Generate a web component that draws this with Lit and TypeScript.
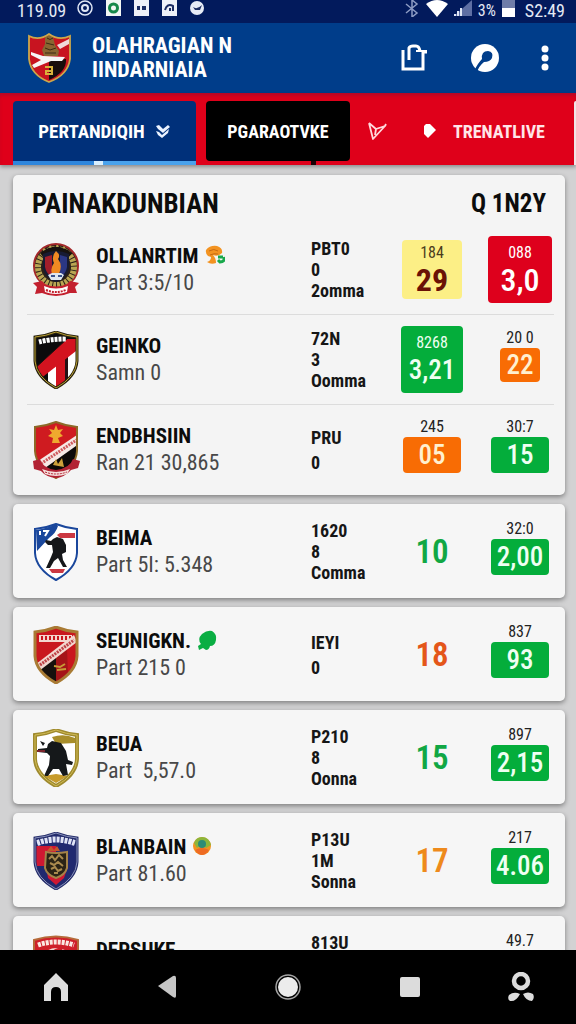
import { LitElement, html, svg, css, nothing } from "lit";
import { customElement, property } from "lit/decorators.js";

type Tone = "yellow" | "red" | "green" | "orange" | "plain-green" | "plain-red" | "plain-amber";

interface Score {
  label?: string;
  value: string;
  tone: Tone;
  boxed?: boolean;
  small?: boolean;
}

interface Team {
  crest: string;
  name: string;
  detail: string;
  mark?: string;
  info: string[];
  first: Score;
  second: Score;
}

const shield = "M3 6 Q14 5 24 1 Q34 5 45 6 V30 Q44 46 24 57 Q4 46 3 30 Z";

const crests: Record<string, unknown> = {
  laurel: svg`
    <circle cx="24" cy="25" r="22" fill="#2a2018" stroke="#a3282a" stroke-width="2"/>
    <circle cx="24" cy="26" r="18" fill="none" stroke="#b9a552" stroke-width="6" stroke-dasharray="3 1"/>
    <path d="M8 12 Q24 -1 40 12 L36 17 Q24 8 12 17Z" fill="#17120f"/>
    <path d="M11 9 Q24 1 37 9" fill="none" stroke="#b9a552" stroke-width="2" stroke-dasharray="2 5"/>
    <path d="M11 13 Q24 7 37 13 V27 Q35 37 24 41 Q13 37 11 27Z" fill="#171b33"/>
    <path d="M13 16 L20 14 V36 Q14 32 13 26Z" fill="#a31e2b"/>
    <path d="M28 14 L35 16 V26 Q34 33 28 36Z" fill="#2b3784"/>
    <path d="M24 10 Q29 14 26 18 Q31 24 27 33 H20 Q18 27 22 22 Q19 16 24 10Z" fill="#f08a22"/>
    <path d="M16 34 L20 32 H29 L32 34 L29 39 H19Z" fill="#dfe7ef"/>
    <path d="M19 35 H23 M26 35 H30" stroke="#39538c" stroke-width="2"/>
    <path d="M1 42 L10 40 L13 43 Q24 48 35 43 L38 40 L47 42 L43 46 L45 52 L38 52 Q24 58 10 52 L3 53 L5 46Z" fill="#c3202e"/>
    <path d="M12 45 Q24 50 36 45 L35 51 Q24 55 13 51Z" fill="#fff"/>
    <path d="M14 49 Q24 53 34 49" fill="none" stroke="#c3202e" stroke-width="2" stroke-dasharray="2 1"/>`,
  stripe: svg`
    <clipPath id="c1"><path d=${shield}/></clipPath>
    <g clip-path="url(#c1)">
      <path d="M0 0H48V58H0Z" fill="#0c0b0c"/>
      <path d="M16 38 L48 12 V58 H16Z" fill="#fff"/>
      <path d="M24 28 H33 V58 H24Z" fill="#d3131f"/>
      <path d="M33 25 L36 22 V58 H33Z" fill="#241014"/>
      <path d="M0 40 L35 8 H48 V17 L8 48Z" fill="#d3131f"/>
      <path d="M0 40 L35 8" stroke="#24100f" stroke-width="1"/>
      <path d="M7 11 Q18 8 34 8" fill="none" stroke="#fff" stroke-width="5" stroke-dasharray="3 1"/>
    </g>
    <path d=${shield} fill="none" stroke="#29220f" stroke-width="3"/>
    <path d=${shield} fill="none" stroke="#b9a032" stroke-width="1"/>`,
  ribbon: svg`
    <clipPath id="c2"><path d=${shield}/></clipPath>
    <g clip-path="url(#c2)">
      <path d="M0 0H48V58H0Z" fill="#cf1b20"/>
      <path d="M8 50 L48 18 V58 H8Z" fill="#0d0908"/>
      <path d="M0 44 L48 12 V22 L6 52Z" fill="#f6e9e6"/>
      <path d="M4 46 L46 18" stroke="#ce5a5d" stroke-width="3" stroke-dasharray="2 1"/>
      <path d="M24 4 L26 9 L31 8 L28 12 L31 15 L26 17 L28 22 H20 L21 17 L16 15 L20 12 L17 8 L22 9Z" fill="#efa92e"/>
      <path d="M21 44 L24 38 L26 43 L30 37 L32 46Z" fill="#cda03a"/>
    </g>
    <path d=${shield} fill="none" stroke="#8c6a28" stroke-width="2"/>
    <path d="M1 40 L8 38 Q10 47 24 49 Q38 47 41 38 L48 40 L46 47 L39 49 Q33 56 24 57 Q14 56 9 50 L2 48Z" fill="#b22233"/>
    <path d="M10 48 Q24 54 38 48 L35 53 Q24 57 13 53Z" fill="#f5dfdb"/>
    <path d="M13 51 Q24 55 35 51" fill="none" stroke="#b22233" stroke-width="1" stroke-dasharray="2 1"/>`,
  fighter: svg`
    <path d=${shield} fill="#fff"/>
    <path d="M4 7 Q16 5 24 1 L26 3 Q24 10 17 15 L5 28Z" fill="#1a479c"/>
    <path d="M8 8 V12 M11 8 H16 L13 13" stroke="#fff" stroke-width="2" fill="none"/>
    <path d="M25 12 L28 10 H43 V15 H28Z" fill="#cb3842"/>
    <path d="M21 16 L25 14 L31 16 L34 22 L34 29 L30 31 L31 37 L35 44 L31 44 L26 35 L22 38 L18 45 L14 45 L19 34 L21 29 L20 22 L16 22 L13 19 L14 17 L19 18Z" fill="#15171a"/>
    <path d="M17 46 H33 L31 50 H20Z" fill="#cb3842"/>
    <path d=${shield} fill="none" stroke="#1a479c" stroke-width="2"/>`,
  sash: svg`
    <clipPath id="c3"><path d=${shield}/></clipPath>
    <g clip-path="url(#c3)">
      <path d="M0 0H48V58H0Z" fill="#c9171e"/>
      <path d="M4 42 L24 30 V58 H4Z" fill="#17100d"/>
      <path d="M24 30 L35 22 L36 50 L24 58Z" fill="#a51418"/>
      <path d="M7 9 H40 V16 H7Z" fill="#f3d7cf"/>
      <path d="M9 12 H40" stroke="#c9171e" stroke-width="4" stroke-dasharray="2 2"/>
      <path d="M4 38 L42 9 L45 16 L7 45Z" fill="#f3d7cf"/>
      <path d="M8 39 L42 14" stroke="#be4347" stroke-width="3" stroke-dasharray="2 1"/>
      <path d="M22 40 L28 41 L33 38 M25 44 L34 43" stroke="#c79a36" stroke-width="2" fill="none"/>
    </g>
    <path d=${shield} fill="none" stroke="#a97b34" stroke-width="3"/>`,
  bear: svg`
    <path d=${shield} fill="#fff"/>
    <path d="M20 8 Q32 4 43 9 V14 L24 15Z" fill="#a88e2a"/>
    <path d="M12 47 L24 45 L36 47 L24 54Z" fill="#c79b2b"/>
    <path d="M16 15 L20 12 L29 14 L34 22 L36 31 L41 33 L40 36 L34 35 L36 46 L31 47 L27 40 L21 40 L16 47 L12 47 L17 36 L18 27 L15 24 L6 23 V20 L15 19Z" fill="#15181a"/>
    <path d="M8 12 L13 14 L11 17Z" fill="#15181a"/>
    <path d="M5 22 H13" stroke="#7c242c" stroke-width="2"/>
    <path d=${shield} fill="none" stroke="#9f8a2e" stroke-width="4"/>
    <path d=${shield} fill="none" stroke="#d0bb55" stroke-width="1"/>`,
  royal: svg`
    <clipPath id="c4"><path d=${shield}/></clipPath>
    <g clip-path="url(#c4)">
      <path d="M0 0H48V58H0Z" fill="#20296f"/>
      <path d="M3 14 H24 V34 H4Z" fill="#cf1832"/>
      <path d="M14 34 H36 L32 46 L24 53 L16 46Z" fill="#cf1832"/>
      <path d="M5 11 Q24 4 43 11" fill="none" stroke="#dfe3f5" stroke-width="6" stroke-dasharray="3 1"/>
      <path d="M14 20 Q24 22 35 20 V36 Q33 43 24 46 Q15 43 13 36Z" fill="#2b2416" stroke="#a48348" stroke-width="2"/>
      <path d="M17 27 L20 24 L23 28 L27 23 L31 27 M18 31 L22 33 L26 30 L31 34 M19 37 L23 35 L26 39 L30 37 M22 41 H26" stroke="#a98a4e" stroke-width="2" fill="none"/>
      <path d="M15 19 L19 14 L22 18 L25 14 L28 19Z" fill="#c4572c"/>
    </g>
    <path d=${shield} fill="none" stroke="#262e6b" stroke-width="3"/>
    <path d=${shield} fill="none" stroke="#8790bb" stroke-width="1"/>`,
  crimson: svg`
    <path d="M2 5 Q24 -2 46 5 V30 Q43 46 24 56 Q5 46 2 30Z" fill="#cf2029" stroke="#b56b3a" stroke-width="2"/>
    <path d="M6 10 Q24 4 42 10" fill="none" stroke="#fbe9e2" stroke-width="5" stroke-dasharray="3 1"/>
    <path d="M10 24 Q14 12 26 13 Q18 15 18 24Z M30 14 Q38 16 40 26 L34 22Z" fill="#f6d9d3"/>`,
};

const marks: Record<string, unknown> = {
  curl: svg`
    <path d="M2 5 Q6 0 13 1 Q19 3 18 8 Q14 12 9 10 Q12 13 12 18 Q7 20 3 17 Q7 16 7 12 Q1 11 2 5Z" fill="#f39321"/>
    <path d="M5 6 Q10 3 14 6 M6 10 Q10 8 14 9" stroke="#c76a12" stroke-width="1" fill="none"/>
    <path d="M14 12 H19 M20 12 Q21 17 16 17 L14 15" stroke="#18a84b" stroke-width="3" fill="none"/>`,
  leaf: svg`
    <path d="M5 4 Q10 0 15 1 Q20 4 19 10 Q18 16 13 16 Q12 20 9 20 L6 18 L2 20 L1 16 L4 14 Q0 9 5 4Z" fill="#0bae43"/>`,
  badge: svg`
    <circle cx="10" cy="10" r="9" fill="#f39321"/>
    <path d="M2 7 Q4 1 10 1 Q17 1 19 9 L14 12 L10 8 L5 12Z" fill="#8db63a"/>
    <circle cx="10" cy="8" r="4" fill="#2c8c77"/>
    <path d="M3 14 Q10 10 17 14 Q14 19 10 19 Q6 19 3 14Z" fill="#ee6b23"/>`,
};

const groups: Team[][] = [
  [
    { crest: "laurel", name: "OLLANRTIM", detail: "Part 3:5/10", mark: "curl", info: ["PBT0", "0", "2omma"],
      first: { label: "184", value: "29", tone: "yellow", boxed: true }, second: { label: "088", value: "3,0", tone: "red", boxed: true } },
    { crest: "stripe", name: "GEINKO", detail: "Samn 0", info: ["72N", "3", "Oomma"],
      first: { label: "8268", value: "3,21", tone: "green", boxed: true }, second: { label: "20 0", value: "22", tone: "orange", small: true } },
    { crest: "ribbon", name: "ENDBHSIIN", detail: "Ran 21 30,865", info: ["PRU", "0"],
      first: { label: "245", value: "05", tone: "orange" }, second: { label: "30:7", value: "15", tone: "green" } },
  ],
  [
    { crest: "fighter", name: "BEIMA", detail: "Part 5I: 5.348", info: ["1620", "8", "Comma"],
      first: { value: "10", tone: "plain-green" }, second: { label: "32:0", value: "2,00", tone: "green" } },
  ],
  [
    { crest: "sash", name: "SEUNIGKN.", detail: "Part 215 0", mark: "leaf", info: ["IEYI", "0"],
      first: { value: "18", tone: "plain-red" }, second: { label: "837", value: "93", tone: "green" } },
  ],
  [
    { crest: "bear", name: "BEUA", detail: "Part  5,57.0", info: ["P210", "8", "Oonna"],
      first: { value: "15", tone: "plain-green" }, second: { label: "897", value: "2,15", tone: "green" } },
  ],
  [
    { crest: "royal", name: "BLANBAIN", detail: "Part 81.60", mark: "badge", info: ["P13U", "1M", "Sonna"],
      first: { value: "17", tone: "plain-amber" }, second: { label: "217", value: "4.06", tone: "green" } },
  ],
  [
    { crest: "crimson", name: "DEPSUKE", detail: "Part 41.20", info: ["813U", "0", "Oonna"],
      first: { value: "12", tone: "plain-amber" }, second: { label: "49.7", value: "3,10", tone: "green" } },
  ],
];

@customElement("score-cell")
class ScoreCell extends LitElement {
  @property({ attribute: false }) score!: Score;

  static styles = css`
    :host { display: block; }
    .stack { display: flex; flex-direction: column; align-items: center; padding-bottom: 10px; }
    .label { font-size: 16px; line-height: 20px; color: #222; }
    .chip { width: 58px; height: 36px; border-radius: 4px; display: grid; place-items: center; }
    .chip.small { width: 40px; height: 34px; }
    .value { font-size: 27px; line-height: 32px; font-weight: 500; }
    .tile { width: 62px; height: 67px; margin: 0 auto; border-radius: 4px; display: flex; flex-direction: column; align-items: center; justify-content: center; }
    .tile .label { color: inherit; }
    .tile .value { font-size: 32px; line-height: 34px; }
    .tile.green .value { font-size: 27px; }
    .tile.yellow .value { font-weight: 700; }
    .yellow { background: #fcef86; color: #6a1206; height: 59px; width: 60px; }
    .red { background: #de001c; color: #fff; width: 64px; }
    .green { background: #04ad3b; color: #effff2; }
    .orange { background: #f86c04; color: #fff0cf; }
    .yellow .label { color: #4b3c1c; }
    .plain { text-align: center; }
    .plain .value { font-size: 33px; line-height: 38px; font-weight: 600; }
    .plain-green { color: #11a744; }
    .plain-red { color: #e4561a; }
    .plain-amber { color: #ee8a1c; }
  `;

  render() {
    const s = this.score;
    if (s.boxed) {
      return html`<div class="tile ${s.tone}"><span class="label">${s.label}</span><span class="value">${s.value}</span></div>`;
    }
    if (!s.label) {
      return html`<div class="plain ${s.tone}"><span class="value">${s.value}</span></div>`;
    }
    return html`<div class="stack"><span class="label">${s.label}</span>
      <div class="chip ${s.tone} ${s.small ? "small" : ""}"><span class="value">${s.value}</span></div></div>`;
  }
}

@customElement("team-row")
class TeamRow extends LitElement {
  @property({ attribute: false }) team!: Team;

  static styles = css`
    :host { display: block; padding: 0 13px 0 19px; }
    .row { display: grid; grid-template-columns: minmax(0, 1fr) 65px 64px 64px; column-gap: 24px; align-items: center; min-height: 89px; }
    .team { display: flex; align-items: center; gap: 16px; white-space: nowrap; }
    .crest { width: 48px; height: 58px; flex: none; }
    .text { padding-bottom: 2px; }
    .name { margin: 0; display: flex; align-items: center; gap: 6px; font-size: 21px; line-height: 28px; font-weight: 700; color: #0c0c0c; }
    .mark { width: 21px; height: 21px; flex: none; }
    .detail { margin: 0; font-size: 22px; line-height: 26px; color: #484848; white-space: pre; }
    .info { font-size: 18px; line-height: 21px; font-weight: 700; color: #161616; }
    .info.short { line-height: 25px; }
    .line { display: block; }
  `;

  render() {
    const t = this.team;
    return html`<div class="row">
      <div class="team">
        <svg class="crest" viewBox="0 0 48 58" aria-hidden="true">${crests[t.crest]}</svg>
        <div class="text">
          <h3 class="name">${t.name}${t.mark ? html`<svg class="mark" viewBox="0 0 21 21" aria-hidden="true">${marks[t.mark]}</svg>` : nothing}</h3>
          <p class="detail">${t.detail}</p>
        </div>
      </div>
      <div class="info ${t.info.length < 3 ? "short" : ""}">${t.info.map((l) => html`<span class="line">${l}</span>`)}</div>
      <score-cell .score=${t.first}></score-cell>
      <score-cell .score=${t.second}></score-cell>
    </div>`;
  }
}

@customElement("app-root")
class AppRoot extends LitElement {
  static styles = css`
    :host { display: flex; flex-direction: column; height: 100vh; overflow: hidden; background: #d2d2d3; font-family: "Roboto Condensed", "Liberation Sans Narrow", Roboto, sans-serif; }
    button { font: inherit; color: inherit; background: none; border: 0; padding: 0; margin: 0; cursor: pointer; }
    .status { flex: none; height: 23px; box-sizing: border-box; padding: 0 11px 0 17px; background: #021a5c; color: #e4e9f5; display: flex; align-items: flex-start; justify-content: space-between; font-size: 18px; line-height: 21px; }
    .side { display: flex; align-items: flex-start; }
    .left { gap: 11px; }
    .right { gap: 6px; }
    .percent { font-size: 16px; }
    .clock { margin-left: 4px; }
    .glyph { height: 17px; flex: none; }
    .bar { flex: none; height: 70px; padding: 0 27px; background: #003d8a; color: #fff; display: flex; align-items: center; }
    .logo { width: 45px; height: 50px; flex: none; margin-right: 20px; }
    .brand { margin: 0; flex: 1; font-size: 22px; line-height: 24px; font-weight: 700; }
    .brand-line { display: block; }
    .actions { display: flex; align-items: center; gap: 41px; }
    .action { display: grid; }
    .tabs { flex: none; height: 72px; box-sizing: border-box; padding: 8px 0 0 13px; background: #df001a; box-shadow: 0 2px 4px #0005, inset 0 4px 4px -2px #7a103880; color: #fff; display: flex; align-items: flex-start; gap: 10px; z-index: 1; }
    .tab { height: 60px; min-width: 0; font-size: 18px; font-weight: 700; white-space: nowrap; display: flex; align-items: center; justify-content: center; gap: 10px; }
    .main-tab { flex: 183 1 0; height: 64px; box-sizing: border-box; padding-bottom: 4px; font-size: 19px; border-radius: 4px 4px 0 0; background: linear-gradient(90deg, #2f86dc 0 44%, #d9efff 44% 49%, #4aa2ec 49%) bottom / 100% 4px no-repeat #00307a; }
    .dark-tab { flex: 144 1 0; background: #000; border-radius: 4px; position: relative; }
    .dark-tab::after { content: ""; position: absolute; top: 100%; left: 73%; width: 5px; height: 4px; background: #1a0004; }
    .icon-tab { flex: 34 1 0; }
    .live-tab { flex: 160 1 0; gap: 16px; color: #ffe5e8; }
    .next { flex: none; width: 2px; height: 64px; background: #efe6e8; border-radius: 2px 0 0 0; }
    .feed { flex: 1; min-height: 0; overflow: hidden; padding: 10px 11px 0 13px; display: flex; flex-direction: column; gap: 9px; }
    .card { flex: none; background: #f6f6f6; border-radius: 5px; box-shadow: 0 2px 5px #0006; padding: 3px 0 2px; }
    .card.lead { padding: 0 0 1px; background: #f4f4f4; }
    .head { display: flex; justify-content: space-between; align-items: center; box-sizing: border-box; padding: 8px 19px 0; height: 50px; font-size: 27px; line-height: 32px; color: #0c0c0c; }
    .title { margin: 0; font-size: inherit; font-weight: 700; }
    .round { font-size: 25px; }
    .rule { border: 0; height: 1px; background: #dcdcdc; margin: 0 11px 0 14px; }
    .nav { flex: none; height: 74px; background: #000; display: grid; grid-template-columns: 112fr 110fr 132fr 112fr 110fr; align-items: center; }
    .key { display: grid; justify-items: center; }
  `;

  render() {
    return html`
      <div class="status">
        <div class="side left">
          <span>119.09</span>
          <svg class="glyph" width="17" viewBox="0 0 17 17"><circle cx="8" cy="8" r="7" fill="none" stroke="#dfe6f5" stroke-width="1.5"/><circle cx="8" cy="8" r="3" fill="none" stroke="#dfe6f5" stroke-width="2"/></svg>
          <svg class="glyph" width="17" viewBox="0 0 17 17"><path d="M1 0H16V16H1Z" fill="#f2f7f4"/><circle cx="8.500" cy="8" r="4" fill="none" stroke="#16894a" stroke-width="3"/></svg>
          <svg class="glyph" width="17" viewBox="0 0 17 17"><path d="M1 0H16V16H1Z" fill="#eef1f8"/><path d="M4 6h3v4H4ZM9 6h4v4H9Z" fill="#1c2d63"/></svg>
          <svg class="glyph" width="17" viewBox="0 0 17 17"><path d="M1 0H16V16H1Z" fill="#eef1f8"/><path d="M4 10Q6 3 12 6V11M9 8v3" fill="none" stroke="#1c2d63" stroke-width="2"/></svg>
          <svg class="glyph" width="17" viewBox="0 0 17 17"><circle cx="8" cy="8" r="7" fill="#e7ecf7"/><path d="M4 7Q8 10 13 5L11 10H6Z" fill="#1c2d63"/></svg>
        </div>
        <div class="side right">
          <svg class="glyph" width="16" viewBox="0 0 16 17"><path d="M2 4L13 13L8 17V0L13 4L2 13" fill="none" stroke="#8d9cc4" stroke-width="1.500"/></svg>
          <svg class="glyph" width="22" viewBox="0 0 22 17"><path d="M0 4Q11 -4 22 4L11 17Z" fill="#fff"/></svg>
          <svg class="glyph" width="18" viewBox="0 0 18 17"><path d="M0 16L18 0V16Z" fill="#5e6fa4"/><path d="M1 16V14M4 16V11M7 16V8" stroke="#dfe6f5" stroke-width="2"/></svg>
          <span class="percent">3%</span>
          <svg class="glyph" width="13" viewBox="0 0 13 17"><path d="M0 0H13V8H0Z" fill="#6f7da8"/><path d="M0 8H13V17H0Z" fill="#fff"/></svg>
          <span class="clock">S2:49</span>
        </div>
      </div>

      <header class="bar">
        <svg class="logo" viewBox="0 0 45 50" aria-hidden="true">
          <path d="M2 3Q12 8 22 1Q32 8 43 3V26Q41 42 22 49Q4 42 2 26Z" fill="#c81420"/>
          <path d="M22 28L39 26Q40 39 22 47Z" fill="#190d0b"/>
          <path d="M4 19L16 23L38 24L35 28H24L7 35L5 32L14 27L4 22Z" fill="#f6f6f6"/>
          <path d="M30 12L42 6V11L33 16Z" fill="#f0dada"/>
          <path d="M18 4Q22 -1 26 4L28 12L32 18L31 23H17L15 17L18 11Z" fill="#8a6531"/>
          <path d="M20 5Q23 8 26 5M19 10L27 12M18 15L23 17L29 15M18 20H29" stroke="#3c2a14" stroke-width="1" fill="none"/>
          <path d="M18 34H25V41H19V38H24" fill="none" stroke="#d9b23c" stroke-width="2"/>
          <path d="M2 3Q12 8 22 1Q32 8 43 3V26Q41 42 22 49Q4 42 2 26Z" fill="none" stroke="#cda84a" stroke-width="1.800"/>
        </svg>
        <h1 class="brand"><span class="brand-line">OLAHRAGIAN N</span><span class="brand-line">IINDARNIAIA</span></h1>
        <div class="actions">
          <button class="action" aria-label="Share"><svg width="28" height="28" viewBox="0 0 28 28"><path d="M2 6V25H22V8H26M8 16V4Q9 2 12 2H15Q18 2 19 7" fill="none" stroke="#fff" stroke-width="3"/><path d="M15 7H26" stroke="#fff" stroke-width="2"/></svg></button>
          <button class="action" aria-label="Explore"><svg width="30" height="28" viewBox="0 0 30 28"><circle cx="15" cy="14" r="14" fill="#fff"/><path d="M4 27Q8 19 12 15Q11 7 18 7Q24 8 22 14Q20 18 14 18Q9 22 7 28Z" fill="#003d8a"/></svg></button>
          <button class="action" aria-label="More"><svg width="8" height="26" viewBox="0 0 8 26"><circle cx="4" cy="4" r="3.500" fill="#fff"/><circle cx="4" cy="13" r="3.500" fill="#fff"/><circle cx="4" cy="22" r="3.500" fill="#fff"/></svg></button>
        </div>
      </header>

      <nav class="tabs">
        <button class="tab main-tab">PERTANDIQIH
          <svg width="16" height="15" viewBox="0 0 16 15"><path d="M1 2L4 1L8 5L13 1L15 3L9 8L8 9L3 5Z M1 7L4 8L7 11L14 5L13 9L7 14L3 11Z" fill="#eaf2ff"/></svg>
        </button>
        <button class="tab dark-tab">PGARAOTVKE</button>
        <button class="tab icon-tab" aria-label="Filter"><svg width="20" height="20" viewBox="0 0 20 20"><path d="M2 2L6 18L18 5L19 3M2 2L9 8L18 5M9 8L8 14" fill="none" stroke="#ffd9dd" stroke-width="1.800" stroke-linejoin="round"/></svg></button>
        <button class="tab live-tab">
          <svg width="14" height="14" viewBox="0 0 14 14"><path d="M3 0H7L13 6L5 14L1 10V2Z" fill="#fff"/></svg>TRENATLIVE
        </button>
        <span class="next"></span>
      </nav>

      <main class="feed">
        ${groups.map((teams, g) => html`<section class="card ${g === 0 ? "lead" : ""}">
          ${g === 0 ? html`<div class="head"><h2 class="title">PAINAKDUNBIAN</h2><strong class="round">Q 1N2Y</strong></div>` : nothing}
          ${teams.map((t, i) => html`${i ? html`<hr class="rule">` : nothing}<team-row .team=${t}></team-row>`)}
        </section>`)}
      </main>

      <nav class="nav">
        <button class="key" aria-label="Home"><svg width="24" height="28" viewBox="0 0 24 28"><path d="M12 0L24 12V28H17V19Q17 14 12 14Q7 14 7 19V28H0V12Z" fill="#dedede"/></svg></button>
        <button class="key" aria-label="Back"><svg width="18" height="24" viewBox="0 0 18 24"><path d="M0 11L15 1Q18 0 18 3V21Q18 24 15 22Z" fill="#c6c6c6"/></svg></button>
        <button class="key" aria-label="Overview"><svg width="26" height="26" viewBox="0 0 26 26"><circle cx="13" cy="13" r="12" fill="none" stroke="#a4a4a4" stroke-width="1.500"/><circle cx="13" cy="13" r="10" fill="#ececec"/></svg></button>
        <button class="key" aria-label="Recent"><svg width="20" height="20" viewBox="0 0 20 20"><rect width="20" height="20" rx="2" fill="#dcdcdc"/></svg></button>
        <button class="key" aria-label="Profile"><svg width="26" height="30" viewBox="0 0 26 30"><circle cx="13" cy="9" r="7" fill="none" stroke="#dcdcdc" stroke-width="4.500"/><path d="M12 22Q8 30 2 29Q-1 27 1 23Q6 19 12 22ZM15 22Q18 29 24 29Q27 26 25 22Q20 19 15 22Z" fill="#dcdcdc"/></svg></button>
      </nav>`;
  }
}
